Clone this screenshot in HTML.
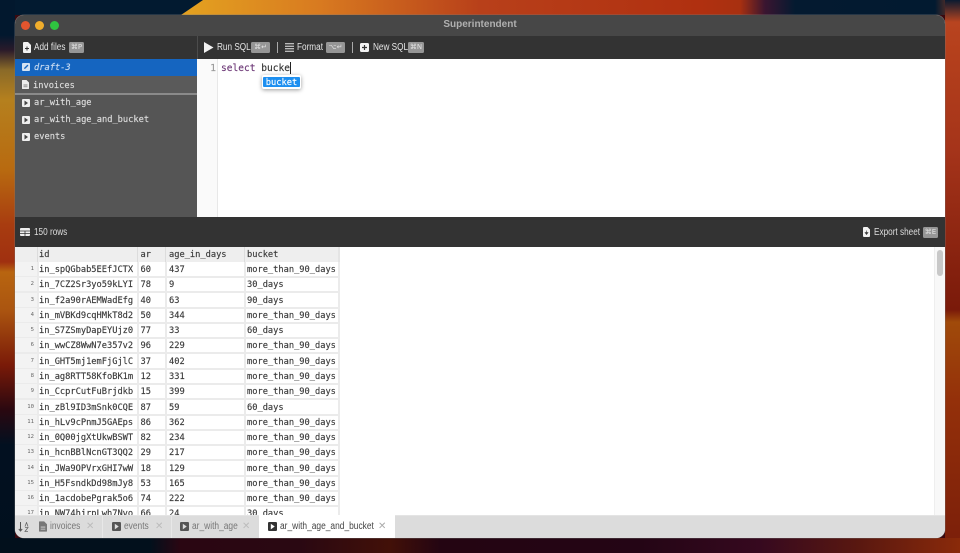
<!DOCTYPE html>
<html><head><meta charset="utf-8"><style>
html,body{margin:0;padding:0;width:960px;height:553px;overflow:hidden;background:#3a0a10}
*{box-sizing:border-box}
.a{position:absolute}
#w{position:absolute;left:15px;top:15px;width:930px;height:523px;border-radius:9px;overflow:hidden;background:#fff;box-shadow:0 0 0 .5px rgba(120,120,120,.6)}
.ui{position:absolute;font-family:"Liberation Sans",sans-serif;font-size:10px;color:#e4e4e4;white-space:nowrap;line-height:12px;transform:scaleX(.82);transform-origin:0 50%}
.k{position:absolute;height:11px;background:#969696;border-radius:1.5px;color:#e2e2e2;font:normal 7px/11px "DejaVu Sans",sans-serif;text-align:center;white-space:nowrap}
.m{position:absolute;font-family:"DejaVu Sans Mono","Liberation Mono",monospace;font-size:8.7px;white-space:nowrap;line-height:12px;-webkit-text-stroke:.15px currentColor}
.s{color:#ddd}
svg{position:absolute;display:block}
.r{position:absolute;left:0;width:325px;height:16px;border-bottom:2px solid #ebebeb;font-family:"DejaVu Sans Mono","Liberation Mono",monospace;font-size:8.7px;color:#3a3a3a;-webkit-text-stroke:.15px currentColor}
.r span{position:absolute;top:2px;line-height:12px;white-space:nowrap}
.r b{position:absolute;left:0;top:0;width:22px;height:14px;background:#f3f3f3;font-weight:normal;font-size:5.6px;line-height:15px;text-align:right;padding-right:3px;color:#666;-webkit-text-stroke:0}
.r span:nth-of-type(1){left:24px}.r span:nth-of-type(2){left:125.5px}.r span:nth-of-type(3){left:154px}.r span:nth-of-type(4){left:232px}
.r i{position:absolute;top:0;height:16px;width:2px;background:#ebebeb}
.tl{position:absolute;top:505px;font-family:"Liberation Sans",sans-serif;font-size:10px;line-height:13px;color:#777;white-space:nowrap;transform:scaleX(.84);transform-origin:0 50%}
.x{position:absolute;top:505px;font:10px/13px "DejaVu Sans",sans-serif;color:#bcbcbc}
</style></head><body>
<div class="a" style="left:0;top:0;width:960px;height:15px;background:linear-gradient(90deg,#e3a020 190px,#d87a20 320px,#b8401a 480px,#b03010 700px,#a83010 740px,#3a1530 765px,#041a30 795px,#021a30 935px,#a04020 960px)"></div>
<div class="a" style="left:0;top:0;width:210px;height:15px;background:#021a30;clip-path:polygon(0 0,203px 0,181px 15px,0 15px)"></div>
<div class="a" style="left:0;top:0;width:15px;height:553px;background:linear-gradient(180deg,#02182e 35px,#2a1a2a 50px,#8a6a28 70px,#b5801e 100px,#b86a10 170px,#a83c10 225px,#a03010 262px,#b86510 272px,#ab5510 310px,#7a1a08 365px,#2a0810 410px,#021020 445px,#01101e 553px)"></div>
<div class="a" style="left:945px;top:0;width:15px;height:553px;background:linear-gradient(180deg,#0a1a30 0,#b84420 22px,#b5401c 50px,#a5341a 150px,#7a1a0a 310px,#a04a0a 322px,#94300a 400px,#7a1e0a 553px)"></div>
<div class="a" style="left:0;top:538px;width:960px;height:15px;background:linear-gradient(90deg,#02101c 150px,#2a0612 180px,#2a0812 300px,#421008 390px,#240512 440px,#240515 640px,#36091f 760px,#5a1810 860px,#8a2a0a 960px)"></div>

<div id="w">
<!-- title bar -->
<div class="a" style="left:0;top:0;width:930px;height:21px;background:#474747"></div>
<div class="a" style="left:6px;top:6px;width:9px;height:9px;border-radius:50%;background:#e2552e"></div>
<div class="a" style="left:20px;top:6px;width:9px;height:9px;border-radius:50%;background:#f0ad2c"></div>
<div class="a" style="left:35px;top:6px;width:9px;height:9px;border-radius:50%;background:#2fc440"></div>
<div class="a" style="left:0;top:4px;width:930px;text-align:center;font:bold 10px/12px 'Liberation Sans',sans-serif;color:#b0b0b0">Superintendent</div>

<!-- toolbar -->
<div class="a" style="left:0;top:21px;width:930px;height:23px;background:#333"></div>
<div class="a" style="left:182px;top:21px;width:1px;height:23px;background:#4c4c4c"></div>
<svg style="left:8px;top:27px" width="8" height="11" viewBox="0 0 8 11"><path d="M0 1a1 1 0 0 1 1-1h4l3 3v7a1 1 0 0 1-1 1H1a1 1 0 0 1-1-1z" fill="#f2f2f2"/><path d="M4 4.5v4M2 6.5h4" stroke="#333" stroke-width="1"/></svg>
<div class="ui" style="left:19px;top:26.5px">Add files</div>
<div class="k" style="left:54px;top:27px;width:15px">⌘P</div>

<svg style="left:189px;top:27px" width="10" height="11" viewBox="0 0 10 11"><path d="M0 0l9.5 5.5L0 11z" fill="#f2f2f2"/></svg>
<div class="ui" style="left:202px;top:26.5px">Run SQL</div>
<div class="k" style="left:236px;top:27px;width:19px">⌘↵</div>
<div class="a" style="left:262px;top:27px;width:1px;height:11px;background:#aaa"></div>
<svg style="left:270px;top:28px" width="9" height="9" viewBox="0 0 9 9"><path d="M0 .75h9M0 3.25h9M0 5.75h9M0 8.25h9" stroke="#e8e8e8" stroke-width="1"/></svg>
<div class="ui" style="left:282px;top:26.5px">Format</div>
<div class="k" style="left:311px;top:27px;width:19px">⌥↵</div>
<div class="a" style="left:337px;top:27px;width:1px;height:11px;background:#aaa"></div>
<svg style="left:345px;top:28px" width="9" height="9" viewBox="0 0 9 9"><rect width="9" height="9" rx="1.5" fill="#f2f2f2"/><path d="M4.5 2v5M2 4.5h5" stroke="#333" stroke-width="1.2"/></svg>
<div class="ui" style="left:358px;top:26.5px">New SQL</div>
<div class="k" style="left:393px;top:27px;width:16px">⌘N</div>

<!-- sidebar -->
<div class="a" style="left:0;top:44px;width:182px;height:158px;background:#555"></div>
<div class="a" style="left:0;top:44px;width:182px;height:17px;background:#1565c0"></div>
<svg style="left:7px;top:48px" width="8" height="8" viewBox="0 0 8 8"><rect width="8" height="8" rx="1" fill="#d5e3f3"/><path d="M2 6l.4-1.4L5.4 1.6l1 1L3.4 5.6z" fill="#1565c0"/></svg>
<div class="m" style="left:19px;top:46.5px;color:#c9dcf2;font-style:italic">draft-3</div>
<div class="a" style="left:0;top:61px;width:182px;height:19px;background:#5a5a5a;border-bottom:2px solid #8a8a8a"></div>
<svg style="left:7px;top:65px" width="7" height="9" viewBox="0 0 7 9"><path d="M0 .5A.5.5 0 0 1 .5 0H4.500L7 2.500V8.500a.5.500 0 0 1-.5.500H.5A.5.500 0 0 1 0 8.500z" fill="#eee"/><path d="M1.500 5h4M1.500 6.800h4" stroke="#666" stroke-width=".7"/></svg>
<div class="m s" style="left:18px;top:65px">invoices</div>
<svg style="left:7px;top:84px" width="8" height="8" viewBox="0 0 8 8"><rect width="8" height="8" rx="1" fill="#eee"/><path d="M2.500 1.500L6 4 2.500 6.500z" fill="#444"/></svg>
<div class="m s" style="left:19px;top:82px">ar_with_age</div>
<svg style="left:7px;top:101px" width="8" height="8" viewBox="0 0 8 8"><rect width="8" height="8" rx="1" fill="#eee"/><path d="M2.500 1.500L6 4 2.500 6.500z" fill="#444"/></svg>
<div class="m s" style="left:19px;top:99px">ar_with_age_and_bucket</div>
<svg style="left:7px;top:118px" width="8" height="8" viewBox="0 0 8 8"><rect width="8" height="8" rx="1" fill="#eee"/><path d="M2.500 1.500L6 4 2.500 6.500z" fill="#444"/></svg>
<div class="m s" style="left:19px;top:116px">events</div>

<!-- editor -->
<div class="a" style="left:182px;top:44px;width:21px;height:158px;background:#fafafa;border-right:1px solid #e8e8e8"></div>
<div class="m" style="left:182px;top:48px;width:19px;text-align:right;font-size:9.55px;color:#999">1</div>
<div class="m" style="left:206px;top:48px;font-size:9.55px;color:#333"><span style="color:#6e3a78">select</span> bucke</div>
<div class="a" style="left:274.5px;top:47px;width:1px;height:12px;background:#222"></div>
<div class="a" style="left:247px;top:60px;width:39px;height:14px;background:#fff;border-radius:2px;box-shadow:0 1px 4px rgba(0,0,0,.4)"></div>
<div class="a" style="left:248px;top:62px;width:37px;height:10px;background:#1d8ff0;border-radius:1px"></div>
<div class="m" style="left:248px;top:63px;width:37px;color:#fff;font-size:8.7px;line-height:10px;text-align:center">bucket</div>

<!-- results bar -->
<div class="a" style="left:0;top:202px;width:930px;height:30px;background:#333"></div>
<svg style="left:5px;top:213px" width="10" height="8" viewBox="0 0 10 8"><rect width="10" height="8" rx="1" fill="#eee"/><path d="M0 3h10M0 5.500h10M5 3v5" stroke="#333" stroke-width=".8"/></svg>
<div class="ui" style="left:19px;top:211.5px;color:#ddd">150 rows</div>
<svg style="left:848px;top:212px" width="7" height="10" viewBox="0 0 7 10"><path d="M0 1a1 1 0 0 1 1-1h3.500L7 2.500V9a1 1 0 0 1-1 1H1a1 1 0 0 1-1-1z" fill="#f2f2f2"/><path d="M3.500 3.500v2.500M2 5.500l1.500 2 1.500-2z" fill="#333" stroke="#333" stroke-width=".6"/></svg>
<div class="ui" style="left:859px;top:211.5px;color:#ddd">Export sheet</div>
<div class="k" style="left:908px;top:212px;width:15px">⌘E</div>

<!-- table header -->
<div class="a" style="left:0;top:232px;width:325px;height:15px;background:#eee;border-right:2px solid #e4e4e4;font:8.7px/15px 'DejaVu Sans Mono','Liberation Mono',monospace;color:#3a3a3a;-webkit-text-stroke:.15px currentColor">
<span class="a" style="left:24px;top:1px">id</span><span class="a" style="left:125.5px;top:1px">ar</span><span class="a" style="left:154px;top:1px">age_in_days</span><span class="a" style="left:232px;top:1px">bucket</span>
<i class="a" style="left:22px;top:0;width:1px;height:15px;background:#dcdcdc"></i><i class="a" style="left:122px;top:0;width:1px;height:15px;background:#dcdcdc"></i><i class="a" style="left:150px;top:0;width:1px;height:15px;background:#dcdcdc"></i><i class="a" style="left:229px;top:0;width:1px;height:15px;background:#dcdcdc"></i>
</div>

<div class="r" style="top:247px"><b>1</b><span>in_spQGbab5EEfJCTX</span><span>60</span><span>437</span><span>more_than_90_days</span><i style="left:22px"></i><i style="left:122px"></i><i style="left:150px"></i><i style="left:229px"></i><i style="left:323px"></i></div>
<div class="r" style="top:262px"><b>2</b><span>in_7CZ2Sr3yo59kLYI</span><span>78</span><span>9</span><span>30_days</span><i style="left:22px"></i><i style="left:122px"></i><i style="left:150px"></i><i style="left:229px"></i><i style="left:323px"></i></div>
<div class="r" style="top:278px"><b>3</b><span>in_f2a90rAEMWadEfg</span><span>40</span><span>63</span><span>90_days</span><i style="left:22px"></i><i style="left:122px"></i><i style="left:150px"></i><i style="left:229px"></i><i style="left:323px"></i></div>
<div class="r" style="top:293px"><b>4</b><span>in_mVBKd9cqHMkT8d2</span><span>50</span><span>344</span><span>more_than_90_days</span><i style="left:22px"></i><i style="left:122px"></i><i style="left:150px"></i><i style="left:229px"></i><i style="left:323px"></i></div>
<div class="r" style="top:308px"><b>5</b><span>in_S7ZSmyDapEYUjz0</span><span>77</span><span>33</span><span>60_days</span><i style="left:22px"></i><i style="left:122px"></i><i style="left:150px"></i><i style="left:229px"></i><i style="left:323px"></i></div>
<div class="r" style="top:323px"><b>6</b><span>in_wwCZ8WwN7e357v2</span><span>96</span><span>229</span><span>more_than_90_days</span><i style="left:22px"></i><i style="left:122px"></i><i style="left:150px"></i><i style="left:229px"></i><i style="left:323px"></i></div>
<div class="r" style="top:339px"><b>7</b><span>in_GHT5mj1emFjGjlC</span><span>37</span><span>402</span><span>more_than_90_days</span><i style="left:22px"></i><i style="left:122px"></i><i style="left:150px"></i><i style="left:229px"></i><i style="left:323px"></i></div>
<div class="r" style="top:354px"><b>8</b><span>in_ag8RTT58KfoBK1m</span><span>12</span><span>331</span><span>more_than_90_days</span><i style="left:22px"></i><i style="left:122px"></i><i style="left:150px"></i><i style="left:229px"></i><i style="left:323px"></i></div>
<div class="r" style="top:369px"><b>9</b><span>in_CcprCutFuBrjdkb</span><span>15</span><span>399</span><span>more_than_90_days</span><i style="left:22px"></i><i style="left:122px"></i><i style="left:150px"></i><i style="left:229px"></i><i style="left:323px"></i></div>
<div class="r" style="top:385px"><b>10</b><span>in_zBl9ID3mSnk0CQE</span><span>87</span><span>59</span><span>60_days</span><i style="left:22px"></i><i style="left:122px"></i><i style="left:150px"></i><i style="left:229px"></i><i style="left:323px"></i></div>
<div class="r" style="top:400px"><b>11</b><span>in_hLv9cPnmJ5GAEps</span><span>86</span><span>362</span><span>more_than_90_days</span><i style="left:22px"></i><i style="left:122px"></i><i style="left:150px"></i><i style="left:229px"></i><i style="left:323px"></i></div>
<div class="r" style="top:415px"><b>12</b><span>in_0Q00jgXtUkwBSWT</span><span>82</span><span>234</span><span>more_than_90_days</span><i style="left:22px"></i><i style="left:122px"></i><i style="left:150px"></i><i style="left:229px"></i><i style="left:323px"></i></div>
<div class="r" style="top:430px"><b>13</b><span>in_hcnBBlNcnGT3QQ2</span><span>29</span><span>217</span><span>more_than_90_days</span><i style="left:22px"></i><i style="left:122px"></i><i style="left:150px"></i><i style="left:229px"></i><i style="left:323px"></i></div>
<div class="r" style="top:446px"><b>14</b><span>in_JWa9OPVrxGHI7wW</span><span>18</span><span>129</span><span>more_than_90_days</span><i style="left:22px"></i><i style="left:122px"></i><i style="left:150px"></i><i style="left:229px"></i><i style="left:323px"></i></div>
<div class="r" style="top:461px"><b>15</b><span>in_H5FsndkDd98mJy8</span><span>53</span><span>165</span><span>more_than_90_days</span><i style="left:22px"></i><i style="left:122px"></i><i style="left:150px"></i><i style="left:229px"></i><i style="left:323px"></i></div>
<div class="r" style="top:476px"><b>16</b><span>in_1acdobePgrak5o6</span><span>74</span><span>222</span><span>more_than_90_days</span><i style="left:22px"></i><i style="left:122px"></i><i style="left:150px"></i><i style="left:229px"></i><i style="left:323px"></i></div>
<div class="r" style="top:491px"><b>17</b><span>in_NW74hjrpLwh7Nvo</span><span>66</span><span>24</span><span>30_days</span><i style="left:22px"></i><i style="left:122px"></i><i style="left:150px"></i><i style="left:229px"></i><i style="left:323px"></i></div>

<!-- scrollbar -->
<div class="a" style="left:919px;top:232px;width:11px;height:268px;background:#f8f8f8;border-left:1px solid #eee"></div>
<div class="a" style="left:922px;top:235px;width:6px;height:26px;background:#c8c8c8;border-radius:3px"></div>

<!-- tab bar -->
<div class="a" style="left:0;top:500px;width:930px;height:23px;background:#dcdcdc;border-top:1px solid #e4e4e4"></div>
<div class="a" style="left:87px;top:500px;width:1px;height:23px;background:#e8e8e8"></div>
<div class="a" style="left:156px;top:500px;width:1px;height:23px;background:#e8e8e8"></div>
<div class="a" style="left:244px;top:500px;width:136px;height:23px;background:#fff"></div>
<svg style="left:3px;top:507px" width="11" height="10" viewBox="0 0 11 10"><path d="M2.500 0v9M.8 7l1.700 2 1.700-2" stroke="#555" stroke-width="1" fill="none"/><path d="M7 4.500L8.500 .5 10 4.500M7 5.500h3l-3 4h3" stroke="#666" stroke-width=".8" fill="none"/></svg>
<svg style="left:24px;top:506px" width="8" height="11" viewBox="0 0 7 9"><path d="M0 .5A.5.5 0 0 1 .5 0H4.500L7 2.500V8.500a.5.500 0 0 1-.5.500H.5A.5.500 0 0 1 0 8.500z" fill="#777"/><path d="M1.500 5h4M1.500 6.800h4" stroke="#ddd" stroke-width=".7"/></svg>
<div class="tl" style="left:35px">invoices</div><div class="x" style="left:71px">✕</div>
<svg style="left:97px;top:507px" width="9" height="9" viewBox="0 0 8 8"><rect width="8" height="8" rx="1" fill="#555"/><path d="M2.500 1.500L6 4 2.500 6.500z" fill="#ddd"/></svg>
<div class="tl" style="left:109px">events</div><div class="x" style="left:140px">✕</div>
<svg style="left:165px;top:507px" width="9" height="9" viewBox="0 0 8 8"><rect width="8" height="8" rx="1" fill="#555"/><path d="M2.500 1.500L6 4 2.500 6.500z" fill="#ddd"/></svg>
<div class="tl" style="left:177px">ar_with_age</div><div class="x" style="left:227px">✕</div>
<svg style="left:253px;top:507px" width="9" height="9" viewBox="0 0 8 8"><rect width="8" height="8" rx="1" fill="#333"/><path d="M2.500 1.500L6 4 2.500 6.500z" fill="#fff"/></svg>
<div class="tl" style="left:265px;color:#444">ar_with_age_and_bucket</div><div class="x" style="left:363px;color:#aaa">✕</div>
</div>
</body></html>
